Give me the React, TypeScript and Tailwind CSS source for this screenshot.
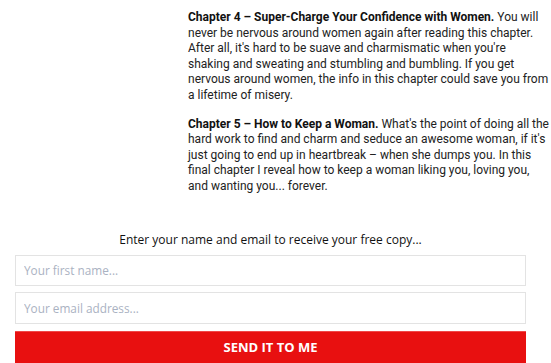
import React from 'react';

const chapters = [
  {
    title: 'Chapter 4 – Super-Charge Your Confidence with Women.',
    body: " You will never be nervous around women again after reading this chapter. After all, it's hard to be suave and charmismatic when you're shaking and sweating and stumbling and bumbling. If you get nervous around women, the info in this chapter could save you from a lifetime of misery.",
  },
  {
    title: 'Chapter 5 – How to Keep a Woman.',
    body: " What's the point of doing all the hard work to find and charm and seduce an awesome woman, if it's just going to end up in heartbreak – when she dumps you. In this final chapter I reveal how to keep a woman liking you, loving you, and wanting you... forever.",
  },
];

export default function App() {
  return (
    <div className="w-[551px] h-[363px] overflow-hidden bg-white">
      {/* Chapter list */}
      <div className="pl-[188px] pt-[10px]">
        <div className="w-[361px] flex flex-col gap-[13px] font-['Roboto',sans-serif] text-[12px] leading-[15.6px] text-[#222]">
          {chapters.map((c) => (
            <p key={c.title}>
              <strong className="font-bold text-[#111]">{c.title}</strong>
              {c.body}
            </p>
          ))}
        </div>
      </div>

      {/* Opt-in form */}
      <div className="mt-[36px] pl-[15px] w-[526px] font-['Open_Sans',sans-serif]">
        <p className="text-center text-[12px] leading-[18px] text-[#111]">
          Enter your name and email to receive your free copy...
        </p>
        <div className="mt-[6px] flex flex-col gap-[6px]">
          <input
            className="h-[31px] w-full border border-[#e3e3e3] px-[8px] text-[11.8px] outline-none placeholder:text-[#aab2c2]"
            placeholder="Your first name..."
          />
          <input
            className="h-[32px] w-full border border-[#e3e3e3] px-[8px] text-[11.8px] outline-none placeholder:text-[#aab2c2]"
            placeholder="Your email address..."
          />
          <button className="mt-[1px] h-[34px] w-full bg-[#e81010] border-t border-[#f04848] text-white font-bold text-[13px] uppercase">
            Send it to me
          </button>
        </div>
      </div>
    </div>
  );
}
